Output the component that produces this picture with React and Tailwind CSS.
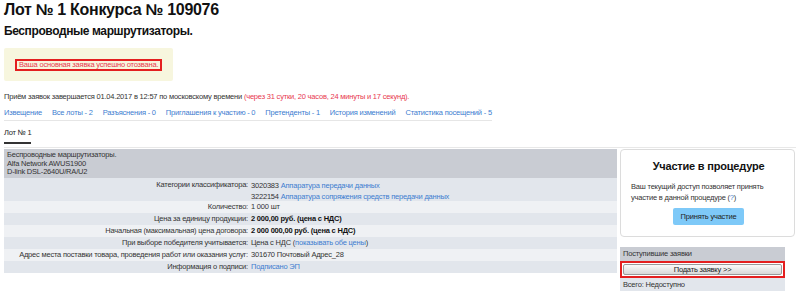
export default function App() {
  const rows = [
    { label: "Количество:", value: <span>1 000 шт</span>, bg: "bg-[#eff1f4]" },
    { label: "Цена за единицу продукции:", value: <b className="text-[#111]">2 000,00 руб. (цена с НДС)</b>, bg: "bg-[#e2e6ec]" },
    { label: "Начальная (максимальная) цена договора:", value: <b className="text-[#111]">2 000 000,00 руб. (цена с НДС)</b>, bg: "bg-[#eff1f4]" },
    { label: "При выборе победителя учитывается:", value: <span>Цена с НДС (<a className="text-[#3d7dd0]">показывать обе цены</a>)</span>, bg: "bg-[#e2e6ec]" },
    { label: "Адрес места поставки товара, проведения работ или оказания услуг:", value: <span>301670 Почтовый Адрес_28</span>, bg: "bg-[#eff1f4]" },
    { label: "Информация о подписи:", value: <a className="text-[#3d7dd0]">Подписано ЭП</a>, bg: "bg-[#e2e6ec]" },
  ];
  const tabs = ["Извещение", "Все лоты - 2", "Разъяснения - 0", "Приглашения к участию - 0", "Претенденты - 1", "История изменений", "Статистика посещений - 5"];
  return (
    <div className="w-[800px] h-[299px] overflow-hidden bg-white text-[#333] font-['Liberation_Sans',Arial,sans-serif] text-[7.5px] tracking-[-0.2px] leading-[12px] px-[4px]">
      <h1 className="text-[16px] leading-[20px] tracking-[-0.3px] font-bold text-[#111]">Лот № 1 Конкурса № 109076</h1>
      <h2 className="text-[12px] leading-[16px] tracking-[-0.4px] font-bold text-[#111] mt-[3px]">Беспроводные маршрутизаторы.</h2>
      <div className="mt-[9px] w-[169px] h-[33px] bg-[#f7f6de] rounded-[2px] flex items-center pl-[11px]">
        <span className="border-2 border-[#e41f1f] text-[#e8384f] px-[2px] h-[12px] flex items-center whitespace-nowrap">Ваша основная заявка успешно отозвана.</span>
      </div>
      <div className="mt-[10px] whitespace-nowrap">Приём заявок завершается 01.04.2017 в 12:57 по московскому времени <span className="text-[#e8384f]">(через 31 сутки, 20 часов, 24 минуты и 17 секунд).</span></div>
      <div className="mt-[4px] flex gap-[10px] w-[488px] border-b border-[#e6e6e6] pb-[1px] text-[#3d7dd0] whitespace-nowrap">
        {tabs.map((t) => (<a key={t}>{t}</a>))}
      </div>
      <div className="mt-[3px] flex border-b border-[#e8e8e8] h-[24px]">
        <div className="h-[20px] border-b-2 border-[#333] text-[#222] pt-[3px] whitespace-nowrap">Лот № 1</div>
      </div>
      <div className="flex gap-[3px] mt-[1px]">
        <div className="w-[613px]">
          <div className="bg-[#c9ccd3] h-[29px] px-[3px] pt-[2px] leading-[8.5px] text-[#333]">
            <div>Беспроводные маршрутизаторы.</div>
            <div>Alfa Network AWUS1900</div>
            <div>D-link DSL-2640U/RA/U2</div>
          </div>
          <div className="bg-[#e2e6ec] flex h-[23px] pt-[1px]">
            <div className="w-[247px] text-right pr-[3px]">Категории классификатора:</div>
            <div className="leading-[11px] pt-[1px]">
              <div>3020383 <a className="text-[#3d7dd0]">Аппаратура передачи данных</a></div>
              <div>3222154 <a className="text-[#3d7dd0]">Аппаратура сопряжения средств передачи данных</a></div>
            </div>
          </div>
          {rows.map((r) => (
            <div key={r.label} className={`flex h-[12px] items-center ${r.bg}`}>
              <div className="w-[247px] text-right pr-[3px] whitespace-nowrap">{r.label}</div>
              <div className="whitespace-nowrap">{r.value}</div>
            </div>
          ))}
        </div>
        <div className="flex flex-col">
          <div className="w-[175px] h-[88px] border border-[#dcdcdc] rounded-[4px] pl-[10px] pr-[8px] pt-[9px]">
            <div className="text-center font-bold text-[11px] tracking-[-0.2px] leading-[14px] text-[#111]">Участие в процедуре</div>
            <div className="mt-[8px] leading-[11px] w-[140px]">Ваш текущий доступ позволяет принять участие в данной процедуре (<a className="text-[#3d7dd0]">?</a>)</div>
            <div className="flex justify-center mt-[5px]">
              <div className="w-[71px] h-[17px] bg-[#7ec9f8] rounded-[2px] flex items-center justify-center text-[#222] whitespace-nowrap">Принять участие</div>
            </div>
          </div>
          <div className="w-[165px] mt-[10px]">
            <div className="bg-[#c9ccd3] h-[14px] px-[3px] flex items-center">Поступившие заявки</div>
            <div className="border-2 border-[#e41f1f] bg-white p-[1px]">
              <div className="h-[11px] bg-gradient-to-b from-[#fafafa] to-[#d8d8d8] border border-[#9a9a9a] rounded-[2px] flex items-center justify-center text-[#222]">Подать заявку &gt;&gt;</div>
            </div>
            <div className="bg-[#e2e6ec] h-[13px] px-[3px] flex items-center">Всего: Недоступно</div>
          </div>
        </div>
      </div>
    </div>
  );
}
